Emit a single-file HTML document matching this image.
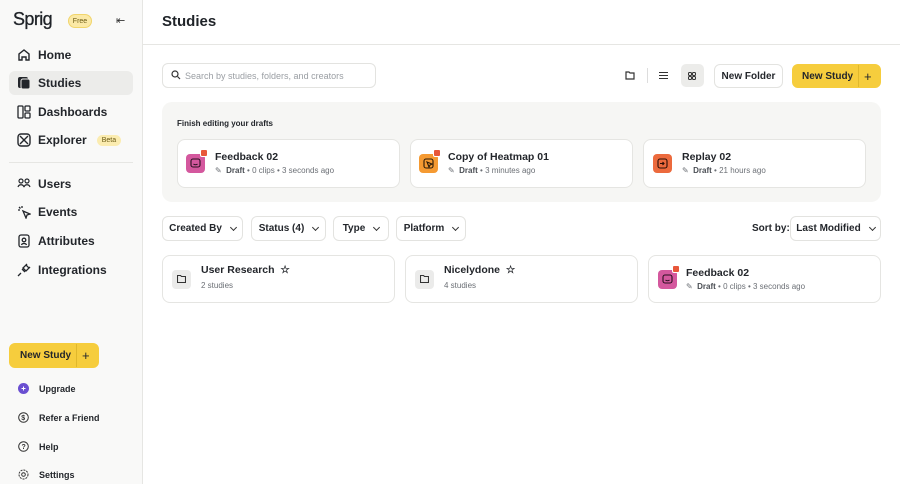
<!DOCTYPE html>
<html><head><style>
*{box-sizing:border-box;margin:0;padding:0}
body{width:900px;height:484px;overflow:hidden;font-family:"Liberation Sans",sans-serif;color:#1f2328;background:#fff;position:relative}
.abs{position:absolute}
.side{left:0;top:0;width:143px;height:484px;background:#f9f9f8;border-right:1px solid #e6e6e3}
.nav{position:absolute;left:9px;width:124px;height:24px;display:flex;align-items:center;padding-left:8px;font-size:12px;font-weight:bold;color:#23262b;border-radius:6px}
.nav svg{width:14px;height:14px;margin-right:7px;flex:none}
.small{position:absolute;left:18px;display:flex;align-items:center;font-size:9px;font-weight:bold;color:#23262b}
.small svg{width:11px;height:11px;margin-right:10px}
.btn{position:absolute;border:1px solid #e3e3e0;border-radius:6px;background:#fff;font-size:10px;font-weight:bold;display:flex;align-items:center;justify-content:center;color:#23262b}
.y{background:#f6cd3d;border-color:#f6cd3d}
.card{position:absolute;background:#fff;border:1px solid #e5e5e2;border-radius:8px}
.ct{position:absolute;font-size:10.5px;font-weight:bold;color:#23262b}
.cs{position:absolute;font-size:8px;color:#6b6f75}
.cs b{color:#4a4e54}
.ic{position:absolute;width:19px;height:19px;border-radius:4px}
.ic svg{position:absolute;left:4px;top:4px}
.dot{position:absolute;width:8px;height:8px;background:#e8573a;border-radius:2px;border:1px solid #fff}
.fd{position:absolute;width:19px;height:19px;border-radius:4px;background:#ebebea}
.chev{display:inline-block;width:5px;height:5px;border-right:1.2px solid #333;border-bottom:1.2px solid #333;transform:rotate(45deg);margin-left:9px;margin-top:-3px}
</style></head><body>
<div class="abs side"></div>
<div class="abs" style="left:13px;top:9px;font-size:18px;color:#1f2328;letter-spacing:-0.6px;-webkit-text-stroke:0.3px #1f2328">Sprig</div>
<div class="abs" style="left:68px;top:14px;width:24px;height:14px;border-radius:7px;background:#fbe9a6;border:1px solid #f1d56b;font-size:7px;display:flex;align-items:center;justify-content:center;color:#6b5a14">Free</div>
<div class="abs" style="left:116px;top:14px;font-size:11px;color:#333">⇤</div>

<div class="nav" style="top:43px"><svg viewBox="0 0 14 14" fill="none" stroke="#23262b" stroke-width="1.4"><path d="M2 12V6l5-4 5 4v6H9V9H5v3z"/></svg>Home</div>
<div class="nav" style="top:71px;background:#ececea"><svg viewBox="0 0 14 14"><rect x="1" y="1" width="10" height="11" rx="2" fill="#23262b"/><rect x="4" y="3" width="9" height="10" rx="2" fill="#23262b" stroke="#ececea"/></svg>Studies</div>
<div class="nav" style="top:100px"><svg viewBox="0 0 14 14" fill="none" stroke="#23262b" stroke-width="1.3"><rect x="1" y="1" width="5" height="12" rx="1"/><rect x="8" y="1" width="5" height="5" rx="1"/><rect x="8" y="8" width="5" height="5" rx="1"/></svg>Dashboards</div>
<div class="nav" style="top:128px"><svg viewBox="0 0 14 14" fill="none" stroke="#23262b" stroke-width="1.4"><rect x="1" y="1" width="12" height="12" rx="3"/><path d="M3 3l8 8M11 3l-8 8"/></svg>Explorer<span style="margin-left:10px;background:#fbecb0;border-radius:7px;font-size:7px;padding:2px 5px;color:#6b5a14;font-weight:normal">Beta</span></div>
<div class="abs" style="left:9px;top:162px;width:124px;height:1px;background:#e6e6e3"></div>
<div class="nav" style="top:172px"><svg viewBox="0 0 14 14" fill="none" stroke="#23262b" stroke-width="1.2"><circle cx="4" cy="4" r="2"/><circle cx="10" cy="4" r="2"/><path d="M1 10c1-3 5-3 6 0M7 10c1-3 5-3 6 0"/></svg>Users</div>
<div class="nav" style="top:200px"><svg viewBox="0 0 14 14" fill="none" stroke="#23262b" stroke-width="1.3"><path d="M6 6l7 3-3 1-1 3z"/><path d="M2 2l1.5 1.5M5 1v2M1 5h2"/></svg>Events</div>
<div class="nav" style="top:229px"><svg viewBox="0 0 14 14" fill="none" stroke="#23262b" stroke-width="1.3"><rect x="2" y="1" width="10" height="12" rx="2"/><circle cx="7" cy="6" r="1.8"/><path d="M4.5 11c.5-2 4.5-2 5 0"/></svg>Attributes</div>
<div class="nav" style="top:258px"><svg viewBox="0 0 14 14" fill="none" stroke="#23262b" stroke-width="1.3"><path d="M1 13l3-3M5 6l3 3M6 5l3-3 3 3-3 3zM9 2l1-1M12 5l1-1"/></svg>Integrations</div>

<div class="btn y" style="left:9px;top:343px;width:90px;height:25px;justify-content:flex-start;padding-left:10px">New Study<span style="position:absolute;left:66px;top:0;bottom:0;border-left:1px solid #e0b82c"></span><span style="position:absolute;left:72px;font-size:13px;font-weight:normal">+</span></div>
<div class="small" style="top:383px"><svg viewBox="0 0 11 11"><circle cx="5.5" cy="5.5" r="5.5" fill="#6a4fd1"/><path d="M3.5 5.5h4M5.5 3.5v4" stroke="#fff"/></svg>Upgrade</div>
<div class="small" style="top:412px"><svg viewBox="0 0 11 11" fill="none" stroke="#333"><circle cx="5.5" cy="5.5" r="4.8"/><text x="3.3" y="8" font-size="7" fill="#333" stroke="none">$</text></svg>Refer a Friend</div>
<div class="small" style="top:441px"><svg viewBox="0 0 11 11" fill="none" stroke="#333"><circle cx="5.5" cy="5.5" r="4.8"/><text x="3.5" y="8" font-size="7" fill="#333" stroke="none">?</text></svg>Help</div>
<div class="small" style="top:469px"><svg viewBox="0 0 11 11" fill="none" stroke="#333"><circle cx="5.5" cy="5.5" r="4.5" stroke-dasharray="2 1"/><circle cx="5.5" cy="5.5" r="1.8"/></svg>Settings</div>

<div class="abs" style="left:143px;top:44px;width:757px;height:1px;background:#e6e6e3"></div>
<div class="abs" style="left:162px;top:13px;font-size:15px;font-weight:bold;color:#1f2328">Studies</div>

<div class="abs" style="left:162px;top:63px;width:214px;height:25px;border:1px solid #e3e3e0;border-radius:6px;font-size:9px;color:#9a9ea3;padding:7px 0 0 22px">Search by studies, folders, and creators</div>
<svg class="abs" style="left:171px;top:70px" width="10" height="10" viewBox="0 0 10 10" fill="none" stroke="#333" stroke-width="1.2"><circle cx="4" cy="4" r="3"/><path d="M6.5 6.5L9 9"/></svg>

<svg class="abs" style="left:625px;top:71px" width="10" height="9" viewBox="0 0 10 9" fill="none" stroke="#333" stroke-width="1.2"><path d="M1 1h3l1 1h4v6H1z"/></svg>
<div class="abs" style="left:647px;top:68px;width:1px;height:15px;background:#ddd"></div>
<svg class="abs" style="left:659px;top:71px" width="9" height="9" viewBox="0 0 9 9" stroke="#333" stroke-width="1.1"><path d="M0 1.5h9M0 4.5h9M0 7.5h9"/></svg>
<div class="abs" style="left:681px;top:64px;width:23px;height:23px;background:#ececea;border-radius:5px"></div>
<svg class="abs" style="left:688px;top:72px" width="8" height="8" viewBox="0 0 8 8" fill="none" stroke="#333" stroke-width="1"><rect x=".5" y=".5" width="3" height="3" rx="1"/><rect x="4.5" y=".5" width="3" height="3" rx="1"/><rect x=".5" y="4.5" width="3" height="3" rx="1"/><rect x="4.5" y="4.5" width="3" height="3" rx="1"/></svg>
<div class="btn" style="left:714px;top:64px;width:69px;height:24px">New Folder</div>
<div class="btn y" style="left:792px;top:64px;width:89px;height:24px;justify-content:flex-start;padding-left:9px">New Study<span style="position:absolute;left:65px;top:0;bottom:0;border-left:1px solid #e0b82c"></span><span style="position:absolute;left:71px;font-size:13px;font-weight:normal">+</span></div>

<div class="abs" style="left:162px;top:102px;width:719px;height:100px;background:#f6f6f4;border-radius:10px"></div>
<div class="abs" style="left:177px;top:119px;font-size:8px;font-weight:bold;color:#23262b">Finish editing your drafts</div>

<div class="card" style="left:177px;top:139px;width:223px;height:49px"></div>
<div class="ic" style="left:186px;top:154px;background:#d4589e"><svg width="11" height="11" viewBox="0 0 11 11" fill="none" stroke="#2a1020" stroke-width="1.1"><rect x="1" y="1" width="9" height="8" rx="2"/><path d="M3.5 6c1 1 3 1 4 0"/></svg></div><div class="dot" style="left:200px;top:149px"></div>
<div class="ct" style="left:215px;top:151px">Feedback 02</div>
<div class="cs" style="left:215px;top:166px">✎ &nbsp;<b>Draft</b> • 0 clips • 3 seconds ago</div>

<div class="card" style="left:410px;top:139px;width:223px;height:49px"></div>
<div class="ic" style="left:419px;top:154px;background:#f59a32"><svg width="11" height="11" viewBox="0 0 11 11" fill="none" stroke="#2a1a08" stroke-width="1.1"><rect x="1" y="1" width="9" height="9" rx="2"/><path d="M4 4l5 2-2 1-1 2z"/></svg></div><div class="dot" style="left:433px;top:149px"></div>
<div class="ct" style="left:448px;top:151px">Copy of Heatmap 01</div>
<div class="cs" style="left:448px;top:166px">✎ &nbsp;<b>Draft</b> • 3 minutes ago</div>

<div class="card" style="left:643px;top:139px;width:223px;height:49px"></div>
<div class="ic" style="left:653px;top:154px;background:#ec6a3d"><svg width="11" height="11" viewBox="0 0 11 11" fill="none" stroke="#2a0d05" stroke-width="1.1"><rect x="1" y="1" width="9" height="9" rx="2"/><path d="M3 5.5h4M5.5 4l1.5 1.5L5.5 7"/></svg></div>
<div class="ct" style="left:682px;top:151px">Replay 02</div>
<div class="cs" style="left:682px;top:166px">✎ &nbsp;<b>Draft</b> • 21 hours ago</div>

<div class="btn" style="left:162px;top:216px;width:81px;height:25px">Created By<span class="chev"></span></div>
<div class="btn" style="left:251px;top:216px;width:75px;height:25px">Status (4)<span class="chev"></span></div>
<div class="btn" style="left:333px;top:216px;width:56px;height:25px">Type<span class="chev"></span></div>
<div class="btn" style="left:396px;top:216px;width:70px;height:25px">Platform<span class="chev"></span></div>
<div class="abs" style="left:752px;top:223px;font-size:10px;font-weight:bold;color:#23262b">Sort by:</div>
<div class="btn" style="left:790px;top:216px;width:91px;height:25px">Last Modified<span class="chev"></span></div>

<div class="card" style="left:162px;top:255px;width:233px;height:48px"></div>
<div class="fd" style="left:172px;top:270px"></div>
<svg class="abs" style="left:177px;top:275px" width="9" height="8" viewBox="0 0 9 8" fill="none" stroke="#333" stroke-width="1.1"><path d="M.5 .5h3l1 1h4v6h-8z"/></svg>
<div class="ct" style="left:201px;top:264px">User Research &nbsp;☆</div>
<div class="cs" style="left:201px;top:281px">2 studies</div>

<div class="card" style="left:405px;top:255px;width:233px;height:48px"></div>
<div class="fd" style="left:415px;top:270px"></div>
<svg class="abs" style="left:420px;top:275px" width="9" height="8" viewBox="0 0 9 8" fill="none" stroke="#333" stroke-width="1.1"><path d="M.5 .5h3l1 1h4v6h-8z"/></svg>
<div class="ct" style="left:444px;top:264px">Nicelydone &nbsp;☆</div>
<div class="cs" style="left:444px;top:281px">4 studies</div>

<div class="card" style="left:648px;top:255px;width:233px;height:48px"></div>
<div class="ic" style="left:658px;top:270px;background:#d4589e"><svg width="11" height="11" viewBox="0 0 11 11" fill="none" stroke="#2a1020" stroke-width="1.1"><rect x="1" y="1" width="9" height="8" rx="2"/><path d="M3.5 6c1 1 3 1 4 0"/></svg></div><div class="dot" style="left:672px;top:265px"></div>
<div class="ct" style="left:686px;top:267px">Feedback 02</div>
<div class="cs" style="left:686px;top:282px">✎ &nbsp;<b>Draft</b> • 0 clips • 3 seconds ago</div>
</body></html>
